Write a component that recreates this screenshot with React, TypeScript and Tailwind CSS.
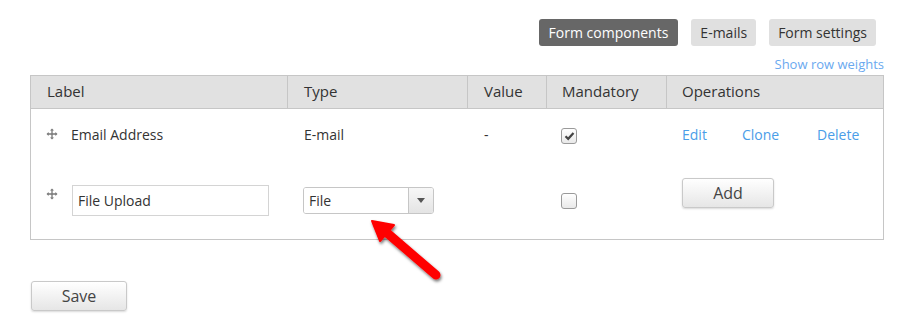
import React from 'react';

const font = { fontFamily: '"Open Sans", "Noto Sans", sans-serif' };

function DragIcon() {
  return (
    <svg width="12" height="12" viewBox="0 0 12 12" className="text-[#777]">
      <path d="M6 0.5 L8 2.6 H4 Z M6 11.5 L8 9.4 H4 Z M0.5 6 L2.6 4 V8 Z M11.5 6 L9.4 4 V8 Z" fill="currentColor" />
      <path d="M6 2 V10 M2 6 H10" stroke="currentColor" strokeWidth="1.3" />
    </svg>
  );
}

function Checkbox({ checked }: { checked?: boolean }) {
  return (
    <div className="w-4 h-4 rounded-[3px] border border-[#9a9a9a] bg-gradient-to-b from-white to-[#e9e9e9] flex items-center justify-center">
      {checked && (
        <svg width="11" height="10" viewBox="0 0 11 10">
          <path d="M1.5 5.2 L4.2 7.8 L9.5 2" stroke="#444" strokeWidth="2.2" fill="none" />
        </svg>
      )}
    </div>
  );
}

function Arrow() {
  return (
    <svg className="absolute left-[360px] top-[211px] pointer-events-none" width="90" height="80" viewBox="0 0 90 80">
      <defs>
        <filter id="sh" x="-20%" y="-20%" width="140%" height="140%">
          <feDropShadow dx="1" dy="2" stdDeviation="1.5" floodColor="#000" floodOpacity="0.55" />
        </filter>
      </defs>
      <g filter="url(#sh)">
        <line x1="76" y1="64" x2="26" y2="21" stroke="#ff0000" strokeWidth="9" strokeLinecap="round" />
        <path d="M12 10 L34 14 L20 30 Z" fill="#ff0000" stroke="#ff0000" strokeWidth="2" strokeLinejoin="round" />
      </g>
    </svg>
  );
}

export default function App() {
  const link = 'text-[#4a9de8]';
  return (
    <div className="relative w-[905px] h-[328px] bg-white text-[14px] text-[#333]" style={font}>
      <div className="flex justify-end gap-[13px] pt-[19px] pr-[29px]">
        <button className="h-[27px] px-[10px] rounded-[3px] bg-[#676767] text-white text-[14px]">Form components</button>
        <button className="h-[27px] px-[9px] rounded-[3px] bg-[#e0e0e0] text-[#333] text-[14px]">E-mails</button>
        <button className="h-[27px] px-[9px] rounded-[3px] bg-[#e0e0e0] text-[#333] text-[14px]">Form settings</button>
      </div>
      <div className="flex justify-end pr-[21px] mt-[9px] h-[20px] items-center">
        <span className="text-[#6aa9ef] text-[13px]">Show row weights</span>
      </div>

      <div className="ml-[30px] w-[854px] border border-[#c6c6c6]">
        <div className="grid grid-cols-[257px_180px_79px_120px_1fr] h-[33px] bg-[#e1e1e1] border-b border-[#c6c6c6] items-stretch text-[15px]">
          <div className="pl-[16px] pb-[2px] flex items-center border-r border-[#c6c6c6]">Label</div>
          <div className="pl-[16px] pb-[2px] flex items-center border-r border-[#c6c6c6]">Type</div>
          <div className="pl-[16px] pb-[2px] flex items-center border-r border-[#c6c6c6]">Value</div>
          <div className="pl-[15px] pb-[2px] flex items-center border-r border-[#c6c6c6]">Mandatory</div>
          <div className="pl-[15px] pb-[2px] flex items-center">Operations</div>
        </div>

        <div className="grid grid-cols-[257px_180px_79px_120px_1fr] h-[55px] pb-[5px] items-center">
          <div className="pl-[15px] flex items-center gap-[13px]">
            <DragIcon />
            <span>Email Address</span>
          </div>
          <div className="pl-[16px]">E-mail</div>
          <div className="pl-[16px]">-</div>
          <div className="pl-[14px] pt-[3px]"><Checkbox checked /></div>
          <div className="pl-[15px] flex">
            <span className={`${link} w-[60px]`}>Edit</span>
            <span className={`${link} w-[75px]`}>Clone</span>
            <span className={link}>Delete</span>
          </div>
        </div>

        <div className="grid grid-cols-[257px_180px_79px_120px_1fr] h-[75px] items-start">
          <div className="pl-[15px] flex items-start gap-[14px]">
            <div className="mt-[24px]"><DragIcon /></div>
            <input
              readOnly
              value="File Upload"
              className="mt-[21px] w-[197px] h-[31px] border border-[#d4d4d4] px-[5px] text-[14px] text-[#333] outline-none"
              style={font}
            />
          </div>
          <div className="pl-[15px]">
            <div className="mt-[23px] w-[131px] h-[27px] border border-[#c6c6c6] rounded-[3px] flex overflow-hidden">
              <div className="flex-1 flex items-center pl-[5px] bg-white">File</div>
              <div className="w-[25px] border-l border-[#c6c6c6] bg-gradient-to-b from-[#f7f7f7] to-[#e4e4e4] flex items-center justify-center">
                <svg width="8" height="5" viewBox="0 0 8 5"><path d="M0 0 H8 L4 5 Z" fill="#555" /></svg>
              </div>
            </div>
          </div>
          <div />
          <div className="pl-[14px] mt-[29px]"><Checkbox /></div>
          <div className="pl-[15px]">
            <button className="mt-[14px] w-[92px] h-[30px] rounded-[3px] border border-[#c9c9c9] bg-gradient-to-b from-white to-[#e6e6e6] shadow-[0_1px_2px_rgba(0,0,0,0.15)] text-[16px] text-[#444]">Add</button>
          </div>
        </div>
      </div>

      <button className="ml-[31px] mt-[41px] w-[96px] h-[30px] rounded-[3px] border border-[#c9c9c9] bg-gradient-to-b from-white to-[#e6e6e6] shadow-[0_1px_2px_rgba(0,0,0,0.15)] text-[16px] text-[#444]">Save</button>

      <Arrow />
    </div>
  );
}
